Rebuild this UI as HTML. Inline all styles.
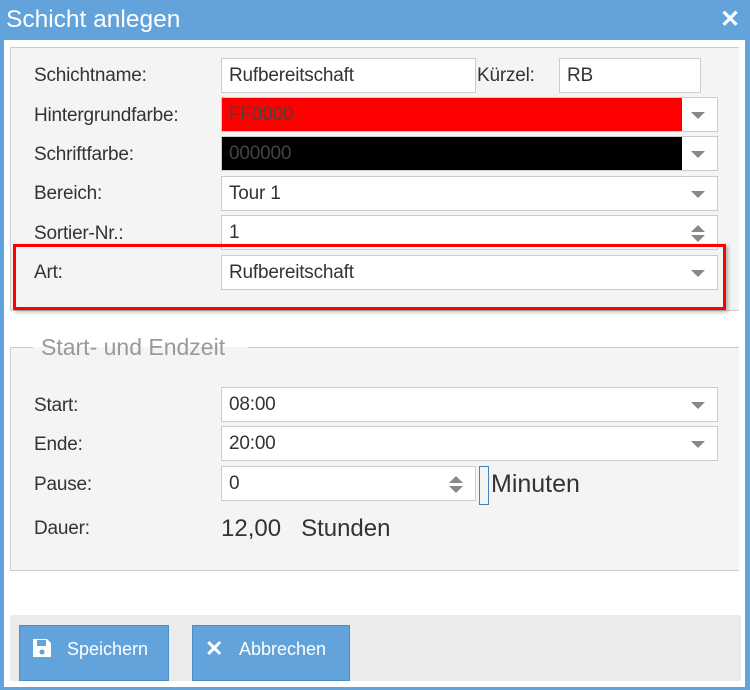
<!DOCTYPE html>
<html><head><meta charset="utf-8"><style>
*{box-sizing:border-box;margin:0;padding:0}
body{width:750px;height:690px;background:#62a3dc;font-family:"Liberation Sans",sans-serif;position:relative;overflow:hidden;color:#333}
.a{position:absolute}
.win{left:4px;top:40px;width:741px;height:647px;background:#fff}
.lab{font-size:19px;color:#333;left:34px;letter-spacing:-0.2px}
.inp{background:#fff;border:1px solid #ccc;height:35px;font-size:19px;padding:6px 0 0 7px;color:#333;letter-spacing:-0.2px}
.dd{position:absolute;right:12px;top:14px;width:0;height:0;border-left:7px solid transparent;border-right:7px solid transparent;border-top:7px solid #888}
.sp{position:absolute;right:12px;top:9px;width:14px;height:18px}
.sp:before{content:"";position:absolute;left:0;top:0;border-left:7px solid transparent;border-right:7px solid transparent;border-bottom:7px solid #888}
.sp:after{content:"";position:absolute;left:0;top:10px;border-left:7px solid transparent;border-right:7px solid transparent;border-top:7px solid #888}
.btn{background:#62a3dc;border:1px solid #4a8fcc;color:#fff;font-size:18px;top:625px;height:56px;padding-top:13px}
</style></head><body>
<div class="a" style="left:6px;top:6px;font-size:24.5px;color:#fff">Schicht anlegen</div>
<div class="a" style="left:720px;top:5px;font-size:24px;color:#fff;font-weight:bold">✕</div>
<div class="a win"></div>
<div class="a" style="left:10px;top:47px;width:729px;height:264px;background:#f4f4f4;border:1px solid #ccc;border-right:none"></div>

<div class="a lab" style="top:65px">Schichtname:</div>
<div class="a inp" style="left:221px;top:58px;width:255px">Rufbereitschaft</div>
<div class="a lab" style="left:477px;top:65px">Kürzel:</div>
<div class="a inp" style="left:559px;top:58px;width:142px">RB</div>

<div class="a lab" style="top:105px">Hintergrundfarbe:</div>
<div class="a inp" style="left:221px;top:97px;width:497px;color:#444"><div class="a" style="left:0;top:0;width:460px;height:33px;background:#f00"></div><span style="position:relative">FF0000</span><div class="dd"></div></div>

<div class="a lab" style="top:144px">Schriftfarbe:</div>
<div class="a inp" style="left:221px;top:136px;width:497px;color:#444"><div class="a" style="left:0;top:0;width:460px;height:33px;background:#000"></div><span style="position:relative">000000</span><div class="dd"></div></div>

<div class="a lab" style="top:183px">Bereich:</div>
<div class="a inp" style="left:221px;top:176px;width:497px">Tour 1<div class="dd"></div></div>

<div class="a lab" style="top:223px">Sortier-Nr.:</div>
<div class="a inp" style="left:221px;top:215px;width:497px">1<div class="sp"></div></div>

<div class="a" style="left:13px;top:244px;width:713px;height:66px;border:3px solid #f00;box-shadow:2px 2px 4px rgba(0,0,0,.3)"></div>
<div class="a lab" style="top:262px">Art:</div>
<div class="a inp" style="left:221px;top:255px;width:497px">Rufbereitschaft<div class="dd"></div></div>

<div class="a" style="left:10px;top:347px;width:729px;height:224px;background:#f4f4f4;border:1px solid #ccc;border-right:none"></div>
<div class="a" style="left:33px;top:347px;width:215px;height:15px;background:#f4f4f4"></div>
<div class="a" style="left:33px;top:333px;width:215px;height:14px;background:#fff"></div>
<div class="a" style="left:41px;top:334px;font-size:23px;color:#999;line-height:26px">Start- und Endzeit</div>

<div class="a lab" style="top:395px">Start:</div>
<div class="a inp" style="left:221px;top:387px;width:497px">08:00<div class="dd"></div></div>
<div class="a lab" style="top:434px">Ende:</div>
<div class="a inp" style="left:221px;top:426px;width:497px">20:00<div class="dd"></div></div>
<div class="a lab" style="top:474px">Pause:</div>
<div class="a inp" style="left:221px;top:466px;width:255px">0<div class="sp"></div></div>
<div class="a" style="left:479px;top:466px;width:10px;height:39px;border:1px solid #4a80b8"></div>
<div class="a" style="left:491px;top:470px;font-size:25px">Minuten</div>
<div class="a lab" style="top:518px">Dauer:</div>
<div class="a" style="left:221px;top:515px;font-size:24px">12,00&nbsp;&nbsp;&nbsp;Stunden</div>

<div class="a" style="left:10px;top:615px;width:731px;height:66px;background:#ebebeb"></div>
<div class="a btn" style="left:19px;width:150px;padding-left:47px">Speichern</div>
<svg class="a" style="left:31px;top:637px" width="22" height="22" viewBox="0 0 22 22"><path d="M2 2h14l4 4v14H2z" fill="#fff"/><rect x="6" y="3" width="9" height="6" fill="#62a3dc"/><circle cx="11" cy="15" r="2.5" fill="#62a3dc"/></svg>
<div class="a btn" style="left:192px;width:158px;padding-left:46px">Abbrechen</div>
<div class="a" style="left:205px;top:636px;font-size:22px;color:#fff;font-weight:bold">✕</div>
</body></html>
